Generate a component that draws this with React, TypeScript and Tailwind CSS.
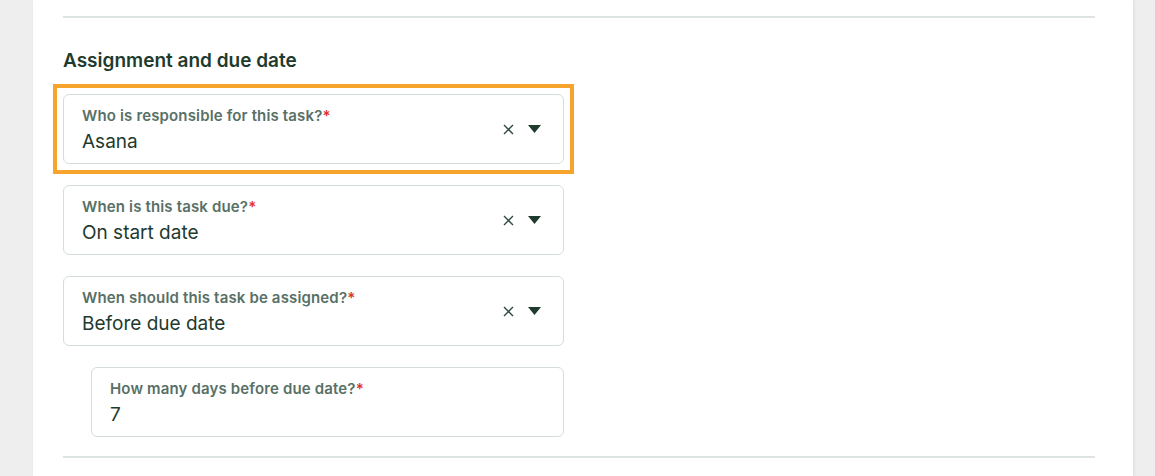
import React from "react";

const fields = [
  { label: "Who is responsible for this task?", value: "Asana", select: true, highlight: true },
  { label: "When is this task due?", value: "On start date", select: true },
  { label: "When should this task be assigned?", value: "Before due date", select: true },
  { label: "How many days before due date?", value: "7", select: false, indent: true },
];

const FieldBox = ({ f }: { f: (typeof fields)[number] }) => (
  <div
    className={`flex items-center h-[70px] rounded-md border border-[#d5ddd9] bg-white pl-[18px] pr-[22px] ${
      f.indent ? "ml-[28px]" : ""
    }`}
  >
    <div className="flex-1 flex flex-col pt-[3px]">
      <div className="text-[15px] leading-[20px] font-semibold tracking-[0.15px] text-[#587066]">
        {f.label}
        <span className="text-[#e0332c]">*</span>
      </div>
      <div className="text-[19px] leading-[26px] text-[#1e3a2e] mt-[3px]">{f.value}</div>
    </div>
    {f.select && (
      <div className="flex items-center gap-[14px]">
        <svg width="11" height="11" viewBox="0 0 11 11" className="text-[#2d4a3e]">
          <path d="M1 1L10 10M10 1L1 10" stroke="currentColor" strokeWidth="1.4" />
        </svg>
        <svg width="13" height="8" viewBox="0 0 13 8" className="text-[#1f3b2d]">
          <path d="M0 0H13L6.5 8Z" fill="currentColor" />
        </svg>
      </div>
    )}
  </div>
);

const Field = ({ f }: { f: (typeof fields)[number] }) =>
  f.highlight ? (
    <div className="-mx-[10px] -my-[10px] border-4 border-[#f7a42c] p-[6px]">
      <FieldBox f={f} />
    </div>
  ) : (
    <FieldBox f={f} />
  );

export default function App() {
  return (
    <div
      className="min-h-[476px] bg-[#eeeeee] flex"
      style={{ fontFamily: "Inter, 'Noto Sans', sans-serif" }}
    >
      <div className="ml-[33px] w-[1100px] bg-white shadow-[1px_0_3px_rgba(0,0,0,0.08)] pl-[30px] pr-[38px] pt-[16px]">
        <div className="border-t-2 border-[#dde3e0]" />
        <h2 className="mt-[31px] text-[19px] leading-[24px] font-semibold text-[#1f3b2d]">
          Assignment and due date
        </h2>
        <div className="mt-[21px] w-[501px] flex flex-col gap-[21px]">
          {fields.map((f) => (
            <Field key={f.label} f={f} />
          ))}
        </div>
        <div className="mt-[19px] border-t-2 border-[#dde3e0]" />
      </div>
    </div>
  );
}
